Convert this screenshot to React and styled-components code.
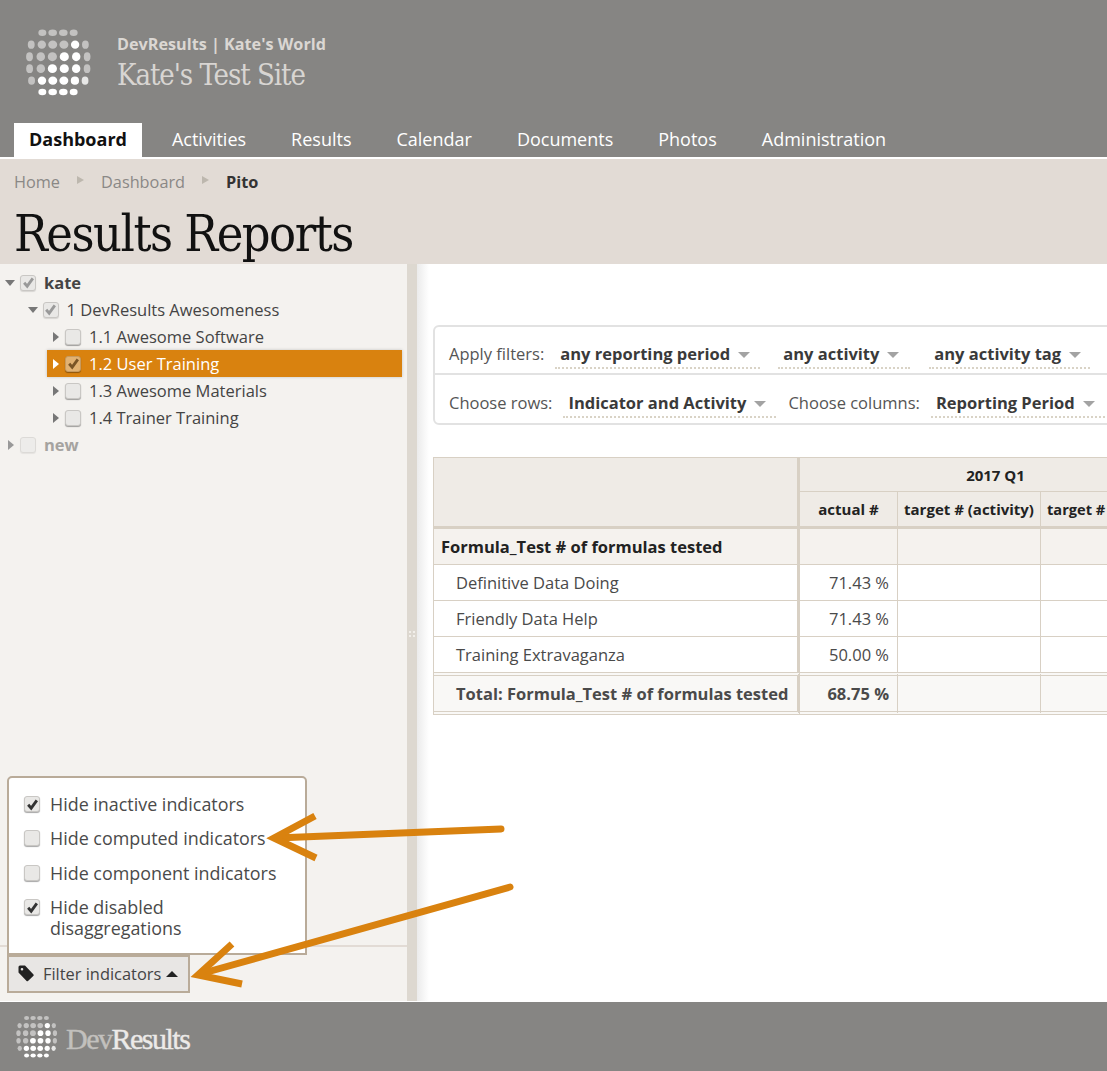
import React from "react";
import styled, { createGlobalStyle } from "styled-components";

const Global = createGlobalStyle`
  html, body { margin: 0; padding: 0; overflow: hidden; background: #fff; }
  body { font-family: "Open Sans", "Liberation Sans", sans-serif; color: #444; }
  * { box-sizing: border-box; }
`;

const Page = styled.div`
  position: relative;
  width: 1107px;
  height: 1071px;
  display: flex;
  flex-direction: column;
  overflow: hidden;
`;

const Header = styled.header`
  height: 157px;
  background: #868583;
  display: flex;
  flex-direction: column;
  justify-content: space-between;
  flex: none;
`;
const Brand = styled.div`
  display: flex;
  align-items: center;
  padding: 27px 0 0 24px;
  gap: 25px;
`;
const BrandText = styled.div`
  display: flex;
  flex-direction: column;
  padding-top: 6px;
`;
const OrgLine = styled.div`
  font-size: 16.2px;
  font-weight: 700;
  line-height: 22px;
  color: #dbd7d3;
`;
const SiteName = styled.div`
  font-family: "DejaVu Serif Condensed", "DejaVu Serif", serif;
  font-stretch: condensed;
  font-size: 29px;
  line-height: 41px;
  letter-spacing: -1.05px;
  color: #d8d5d2;
`;
const Nav = styled.nav`
  display: flex;
  gap: 15px;
  padding-left: 14px;
`;
const NavItem = styled.div`
  height: 34px;
  padding: 0 15px;
  font-size: 18px;
  line-height: 33px;
  font-weight: ${(p) => (p.$active ? 700 : 400)};
  background: ${(p) => (p.$active ? "#fff" : "transparent")};
  color: ${(p) => (p.$active ? "#111" : "#fff")};
`;

const TitleBand = styled.div`
  margin-top: 2px;
  height: 105px;
  flex: none;
  background: #e2dbd5;
  padding: 12px 14px 0;
`;
const Crumbs = styled.div`
  display: flex;
  align-items: center;
  height: 22px;
  font-size: 16.3px;
  color: #8a8886;
`;
const CrumbSep = styled.span`
  width: 0;
  height: 0;
  margin: 0 17px;
  position: relative;
  top: -2px;
  border-left: 7px solid #bdb7ae;
  border-top: 4px solid transparent;
  border-bottom: 4px solid transparent;
`;
const CrumbCurrent = styled.span`
  font-weight: 700;
  color: #333;
`;
const Title = styled.h1`
  margin: 10px 0 0;
  font-family: "DejaVu Serif Condensed", "DejaVu Serif", serif;
  font-stretch: condensed;
  font-weight: 400;
  font-size: 50px;
  line-height: 62px;
  letter-spacing: -1.5px;
  color: #111;
`;

const Body = styled.div`
  flex: 1;
  display: flex;
  min-height: 0;
`;
const Sidebar = styled.aside`
  position: relative;
  width: 407px;
  flex: none;
  background: #f4f2ef;
  display: flex;
  flex-direction: column;
  justify-content: space-between;
  padding-top: 5px;
`;
const Tree = styled.div`
  display: flex;
  flex-direction: column;
`;
const TreeRow = styled.div`
  display: flex;
  align-items: center;
  height: 27px;
  padding-left: ${(p) => 5 + p.$level * 22.5}px;
  font-size: 16.5px;
  color: ${(p) => (p.$selected ? "#fff" : p.$muted ? "#a5a3a0" : "#444")};
  font-weight: ${(p) => (p.$bold ? 700 : 400)};
  ${(p) =>
    p.$selected &&
    `background: #d9820f; margin: 0 5px 0 47px; padding-left: 3px; box-shadow: 0 0 3px rgba(0,0,0,.2);`}
`;
const Caret = styled.span`
  width: 15px;
  flex: none;
  display: flex;
  padding-left: ${(p) => (p.$open ? 0 : 3)}px;
  &::before {
    content: "";
    width: 0;
    height: 0;
    ${(p) =>
      p.$open
        ? `border-top: 6px solid ${p.$color}; border-left: 5.5px solid transparent; border-right: 5.5px solid transparent;`
        : `border-left: 6px solid ${p.$color}; border-top: 5.5px solid transparent; border-bottom: 5.5px solid transparent;`}
  }
`;
const Box = styled.span`
  width: 16px;
  height: 16px;
  flex: none;
  display: flex;
  align-items: center;
  justify-content: center;
  border-radius: 3px;
  background: ${(p) => (p.$selected ? "#e2b272" : "#e9e8e6")};
  border: 1px solid ${(p) => (p.$selected ? "#c79a5e" : "#c9c7c4")};
  box-shadow: 0 1px 1px rgba(0, 0, 0, 0.35);
  opacity: ${(p) => (p.$faint ? 0.55 : 1)};
  ${(p) => p.$flat && "box-shadow: 0 1px 1px rgba(0, 0, 0, 0.12);"}
`;
const TreeLabel = styled.span`
  margin-left: 8px;
`;

const Tick = ({ color }) => (
  <svg width="13" height="13" viewBox="0 0 12 12">
    <path d="M2 6.2 L4.8 9.4 L10 2.2" fill="none" stroke={color} strokeWidth="2.6" />
  </svg>
);

const SideFoot = styled.div`
  height: 56px;
  border-top: 2px solid #e2dbd5;
  padding: 8px 0 0 7px;
`;
const FilterButton = styled.div`
  width: 183px;
  height: 38px;
  background: #e8e6e4;
  border: 2px solid #b9ab99;
  display: flex;
  align-items: center;
  padding: 0 0 1px 9px;
  font-size: 16.4px;
  color: #444;
`;
const ButtonText = styled.span`
  margin-left: 9px;
`;
const UpCaret = styled.span`
  margin-left: 5px;
  width: 0;
  height: 0;
  border-bottom: 6px solid #222;
  border-left: 6px solid transparent;
  border-right: 6px solid transparent;
`;
const Popover = styled.div`
  position: absolute;
  left: 7px;
  top: 512px;
  width: 300px;
  height: 179px;
  background: #fff;
  border: 2px solid #b9ab99;
  border-radius: 5px 5px 0 0;
  padding: 10px 15px 0;
  display: flex;
  flex-direction: column;
`;
const PopRow = styled.div`
  display: flex;
  align-items: flex-start;
  min-height: ${(p) => p.$h}px;
  font-size: 17.9px;
  line-height: 21px;
  color: #4a4a4a;
  padding-top: 6px;
`;
const PopBox = styled(Box)`
  margin-top: 2px;
`;
const PopLabel = styled.span`
  margin-left: 10px;
  width: 240px;
`;

const Splitter = styled.div`
  width: 10px;
  flex: none;
  background: #ddd8d0;
  display: flex;
  align-items: center;
  justify-content: center;
`;
const Grip = styled.span`
  width: 8px;
  height: 8px;
  margin-top: 3px;
  background-image: radial-gradient(circle, #f2efea 1.1px, transparent 1.4px);
  background-size: 4px 4px;
`;

const Main = styled.main`
  flex: 1;
  min-width: 0;
  background: linear-gradient(to right, #ebebeb, #fff 12px);
  padding: 61px 0 0 16px;
  overflow: hidden;
`;
const FilterBox = styled.div`
  width: 720px;
  height: 100px;
  border: 2px solid #e2e2e2;
  border-radius: 6px;
`;
const FilterRow = styled.div`
  height: 48px;
  display: flex;
  align-items: center;
  padding: 6px 0 0 14px;
  font-size: 16.5px;
  color: #555;
  ${(p) => p.$divided && "border-bottom: 2px solid #e2e2e2;"}
`;
const Dropdown = styled.div`
  margin-left: ${(p) => p.$ml}px;
  width: ${(p) => p.$w}px;
  height: 31px;
  flex: none;
  display: flex;
  align-items: center;
  padding: 3px 0 0 5px;
  border-bottom: 2px dotted #d9d3c6;
  font-weight: 700;
  color: #3a3a3a;
  white-space: nowrap;
`;
const GrayCaret = styled.span`
  margin-left: 8px;
  margin-top: 2px;
  width: 0;
  height: 0;
  border-top: 6px solid #a3a3a3;
  border-left: 6px solid transparent;
  border-right: 6px solid transparent;
`;
const FilterLabel = styled.span`
  margin-left: ${(p) => p.$ml || 0}px;
  white-space: nowrap;
`;

const Table = styled.table`
  margin-top: 32px;
  border-collapse: separate;
  border-spacing: 0;
  table-layout: fixed;
  width: 759px;
  border-left: 1px solid #d8d0c4;
`;
const line = "#d8d0c4";
const Cell = styled.td`
  padding: 0;
  height: ${(p) => p.$h || 36}px;
  border-right: ${(p) => (p.$thick ? 3 : 1)}px solid ${line};
  border-bottom: ${(p) => p.$bb || "1px"} ${(p) => p.$bs || "solid"} ${line};
  ${(p) => p.$bt && `border-top: ${p.$bt} ${line};`}
  background: ${(p) => p.$bg || "#fff"};
  text-align: ${(p) => p.$align || "left"};
  padding-left: ${(p) => p.$pl || 0}px;
  padding-right: ${(p) => p.$pr || 0}px;
  font-weight: ${(p) => (p.$bold ? 700 : 400)};
  color: ${(p) => p.$color || "#4a4a4a"};
  font-size: ${(p) => p.$fs || 16.5}px;
  white-space: nowrap;
  overflow: hidden;
`;

const Footer = styled.footer`
  margin-top: 1px;
  height: 69px;
  flex: none;
  background: #868583;
  display: flex;
  align-items: center;
  padding-left: 15px;
  gap: 8px;
`;
const FootWord = styled.span`
  font-family: "Liberation Serif", serif;
  font-size: 30px;
  letter-spacing: -1.5px;
  margin-top: 5px;
  -webkit-text-stroke: 0.4px currentColor;
  color: #eceae8;
`;
const FootDev = styled.span`
  color: #c2c0bd;
`;
const ArrowLayer = styled.svg`
  position: absolute;
  left: 0;
  top: 0;
  pointer-events: none;
`;

const ROW_Y = [-0.88, -0.52, -0.16, 0.2, 0.56, 0.9];
const WIDE_X = [-0.86, -0.52, -0.17, 0.19, 0.55, 0.88];
const NARROW_X = [-0.47, -0.16, 0.16, 0.47];
const Globe = ({ size, blur }) => {
  const dots = [];
  ROW_Y.forEach((fy, r) => {
    const narrow = r === 0 || r === 5;
    const cl = Math.sqrt(1 - fy * fy);
    const xs = narrow ? NARROW_X : WIDE_X;
    xs.forEach((fx, i) => {
      const c = narrow ? i + 1 : i;
      const x = narrow ? fx : fx * (0.55 + 0.45 * cl);
      const co = Math.sqrt(Math.max(0, 1 - x * x - fy * fy * 0.3));
      const bright = r >= 1 && c <= 4 && r + c >= 5;
      dots.push(
        <ellipse
          key={r + "_" + c}
          cx={50 + x * 49}
          cy={50 + fy * 49}
          rx={3.2 + 3.6 * co}
          ry={3.2 + 3.4 * cl}
          fill="#fff"
          opacity={bright ? 1 : r === 4 && c === 5 ? 0.8 : 0.5}
        />
      );
    });
  });
  return (
    <svg width={size} height={size} viewBox="0 0 100 100" style={{ filter: `blur(${blur}px)` }}>
      {dots}
    </svg>
  );
};

const tree = [
  { level: 0, open: true, label: "kate", bold: true, check: "gray", flat: true },
  { level: 1, open: true, label: "1 DevResults Awesomeness", check: "gray", flat: true },
  { level: 2, label: "1.1 Awesome Software" },
  { level: 2, label: "1.2 User Training", selected: true, check: "brown" },
  { level: 2, label: "1.3 Awesome Materials" },
  { level: 2, label: "1.4 Trainer Training" },
  { level: 0, label: "new", bold: true, muted: true, faint: true, flat: true },
];

const rows = [
  ["Definitive Data Doing", "71.43 %"],
  ["Friendly Data Help", "71.43 %"],
  ["Training Extravaganza", "50.00 %"],
];

const HEAD = "#efebe6";

export default function App() {
  return (
    <Page>
      <Global />
      <Header>
        <Brand>
          <Globe size={68} blur={0.7} />
          <BrandText>
            <OrgLine>DevResults | Kate's World</OrgLine>
            <SiteName>Kate's Test Site</SiteName>
          </BrandText>
        </Brand>
        <Nav>
          <NavItem $active>Dashboard</NavItem>
          {["Activities", "Results", "Calendar", "Documents", "Photos", "Administration"].map((n) => (
            <NavItem key={n}>{n}</NavItem>
          ))}
        </Nav>
      </Header>
      <TitleBand>
        <Crumbs>
          <span>Home</span>
          <CrumbSep />
          <span>Dashboard</span>
          <CrumbSep />
          <CrumbCurrent>Pito</CrumbCurrent>
        </Crumbs>
        <Title>Results Reports</Title>
      </TitleBand>
      <Body>
        <Sidebar>
          <Tree>
            {tree.map((t) => (
              <TreeRow key={t.label} $level={t.level} $selected={t.selected} $bold={t.bold} $muted={t.muted}>
                <Caret $open={t.open} $color={t.selected ? "#fff" : t.muted ? "#999" : "#777"} />
                <Box $selected={t.selected} $faint={t.faint} $flat={t.flat}>
                  {t.check === "gray" && <Tick color="#999" />}
                  {t.check === "brown" && <Tick color="#7a5526" />}
                </Box>
                <TreeLabel>{t.label}</TreeLabel>
              </TreeRow>
            ))}
          </Tree>
          <SideFoot>
            <FilterButton>
              <svg width="16" height="17" viewBox="0 0 16 17">
                <path d="M0.5 2 Q0.5 0.5 2 0.5 L7 0.5 L15.5 9.5 Q16 10.2 15.5 10.8 L10 16 Q9.3 16.6 8.6 16 L0.5 7.5 Z M4 3 A1.3 1.3 0 1 0 4 5.6 A1.3 1.3 0 1 0 4 3 Z" fill="#222" fillRule="evenodd" />
              </svg>
              <ButtonText>Filter indicators</ButtonText>
              <UpCaret />
            </FilterButton>
          </SideFoot>
          <Popover>
            <PopRow $h={34}>
              <PopBox><Tick color="#333" /></PopBox>
              <PopLabel>Hide inactive indicators</PopLabel>
            </PopRow>
            <PopRow $h={35}>
              <PopBox />
              <PopLabel>Hide computed indicators</PopLabel>
            </PopRow>
            <PopRow $h={34}>
              <PopBox />
              <PopLabel>Hide component indicators</PopLabel>
            </PopRow>
            <PopRow $h={48}>
              <PopBox><Tick color="#333" /></PopBox>
              <PopLabel>Hide disabled disaggregations</PopLabel>
            </PopRow>
          </Popover>
        </Sidebar>
        <Splitter><Grip /></Splitter>
        <Main>
          <FilterBox>
            <FilterRow $divided>
              <FilterLabel>Apply filters:</FilterLabel>
              <Dropdown $ml={11} $w={205}>any reporting period<GrayCaret /></Dropdown>
              <Dropdown $ml={18} $w={132}>any activity<GrayCaret /></Dropdown>
              <Dropdown $ml={19} $w={161}>any activity tag<GrayCaret /></Dropdown>
            </FilterRow>
            <FilterRow>
              <FilterLabel>Choose rows:</FilterLabel>
              <Dropdown $ml={11} $w={213}>Indicator and Activity<GrayCaret /></Dropdown>
              <FilterLabel $ml={12}>Choose columns:</FilterLabel>
              <Dropdown $ml={11} $w={190}>Reporting Period<GrayCaret /></Dropdown>
            </FilterRow>
          </FilterBox>
          <Table>
            <colgroup>
              <col style={{ width: 366 }} />
              <col style={{ width: 98 }} />
              <col style={{ width: 143 }} />
              <col style={{ width: 151 }} />
            </colgroup>
            <tbody>
              <tr>
                <Cell rowSpan={2} $thick $bg={HEAD} $bb="3px" $bt="1px solid" />
                <Cell colSpan={3} $h={35} $bg={HEAD} $bold $fs={15} $align="center" $color="#222" $bt="1px solid">
                  2017 Q1
                </Cell>
              </tr>
              <tr>
                <Cell $h={37} $bg={HEAD} $bb="3px" $bold $fs={15} $align="center" $color="#222">actual #</Cell>
                <Cell $h={37} $bg={HEAD} $bb="3px" $bold $fs={15} $align="center" $color="#222">target # (activity)</Cell>
                <Cell $h={37} $bg={HEAD} $bb="3px" $bold $fs={14.6} $pl={6} $color="#222">target #</Cell>
              </tr>
              <tr>
                <Cell $thick $bg="#f5f2ee" $bold $pl={7} $color="#222">Formula_Test # of formulas tested</Cell>
                <Cell $bg="#f5f2ee" />
                <Cell $bg="#f5f2ee" />
                <Cell $bg="#f5f2ee" />
              </tr>
              {rows.map(([n, v], i) => {
                const last = i === rows.length - 1;
                const h = last ? 35 : 36;
                const bb = last ? "0" : "1px";
                return (
                  <tr key={n}>
                    <Cell $thick $pl={22} $h={h} $bb={bb}>{n}</Cell>
                    <Cell $align="right" $pr={8} $h={h} $bb={bb}>{v}</Cell>
                    <Cell $h={h} $bb={bb} />
                    <Cell $h={h} $bb={bb} />
                  </tr>
                );
              })}
              <tr>
                <Cell $thick $bg="#f9f8f6" $bold $pl={22} $h={43} $bb="4px" $bs="double" $bt="4px double">
                  Total: Formula_Test # of formulas tested
                </Cell>
                <Cell $bg="#f9f8f6" $bold $align="right" $pr={8} $h={43} $bb="4px" $bs="double" $bt="4px double">68.75 %</Cell>
                <Cell $bg="#f9f8f6" $h={43} $bb="4px" $bs="double" $bt="4px double" />
                <Cell $bg="#f9f8f6" $h={43} $bb="4px" $bs="double" $bt="4px double" />
              </tr>
            </tbody>
          </Table>
        </Main>
      </Body>
      <Footer>
        <Globe size={43} blur={0.4} />
        <FootWord><FootDev>Dev</FootDev>Results</FootWord>
      </Footer>
      <ArrowLayer width="1107" height="1071" viewBox="0 0 1107 1071">
        <g fill="none" stroke="#d9820f" strokeWidth="7">
          <path d="M501 829 L276 838" strokeLinecap="round" />
          <path d="M315 816 L274 838 L316 858" />
          <path d="M510 887 L200 974" strokeLinecap="round" />
          <path d="M232 944 L198 975 L242 984" />
        </g>
      </ArrowLayer>
    </Page>
  );
}
